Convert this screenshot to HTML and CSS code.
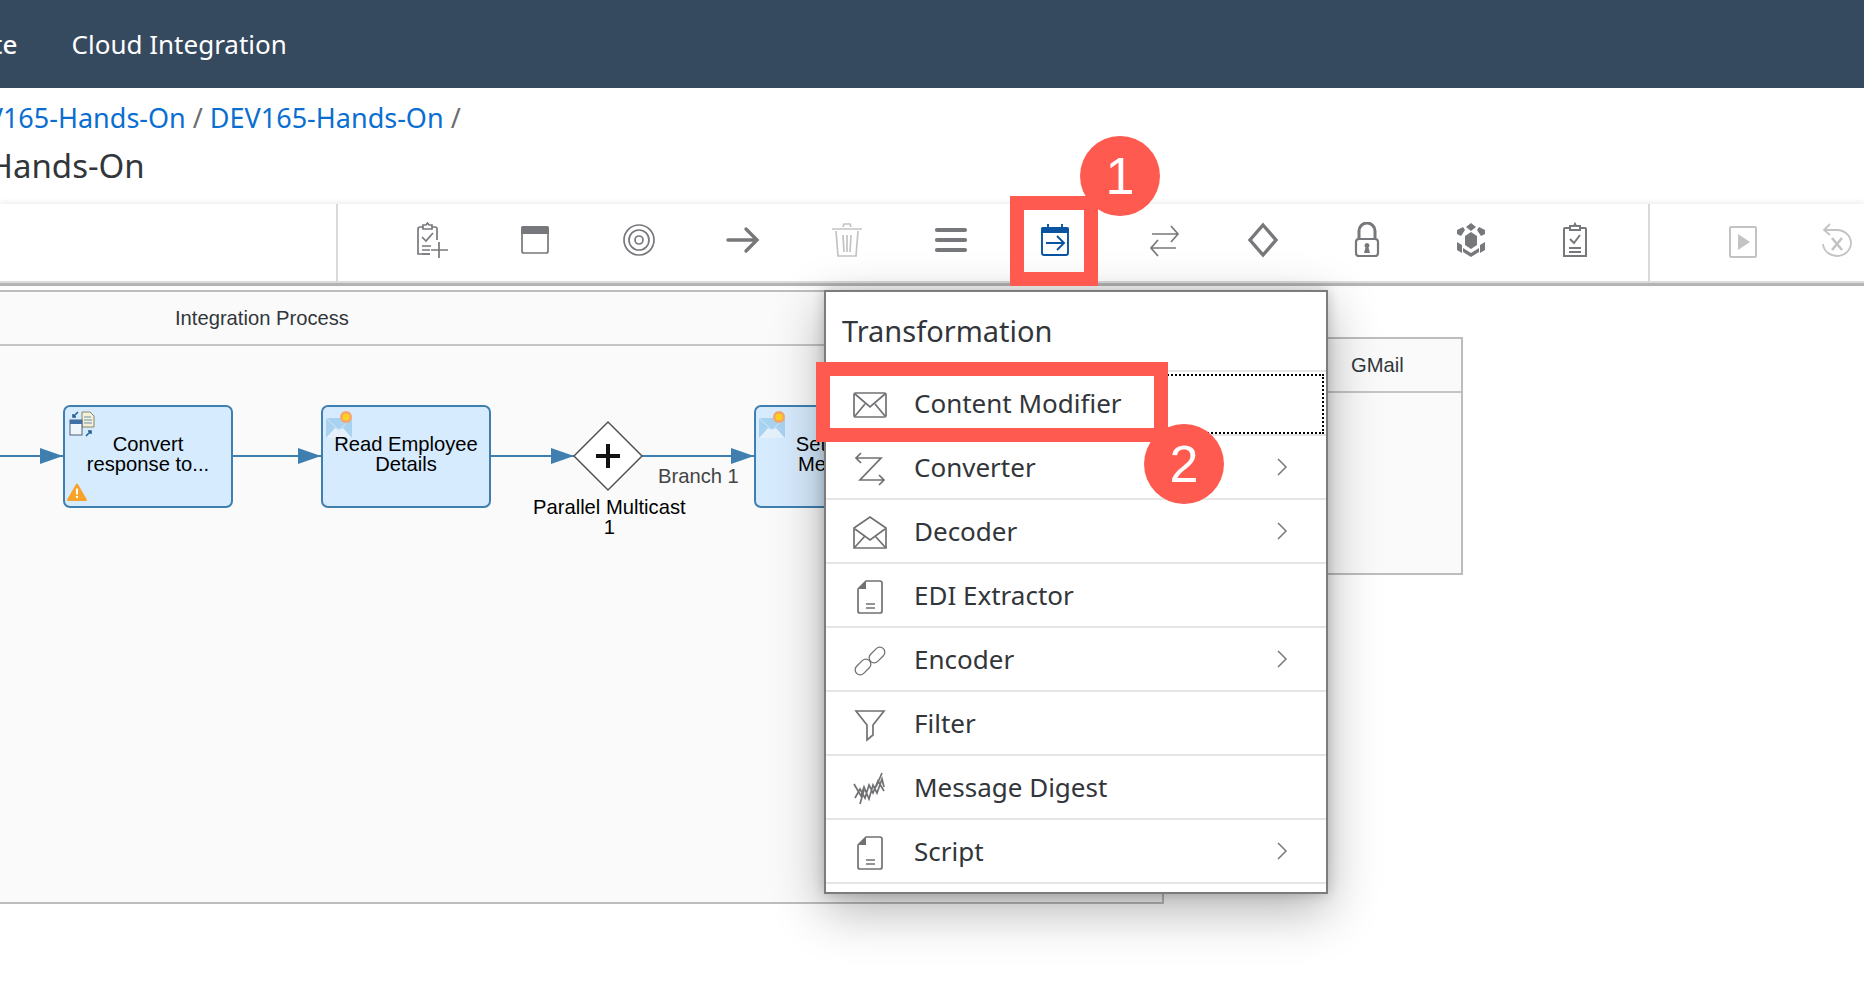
FILE: index.html
```html
<!DOCTYPE html>
<html lang="en">
<head>
    <meta charset="UTF-8">
    <meta name="viewport" content="width=device-width, initial-scale=1.0">
    <title>Cloud Integration</title>
    <link rel="stylesheet" href="styles.css">
</head>
<body>
    <header class="shell-bar">
        <span class="shell-crop">Suite</span>
        <span class="shell-title">Cloud Integration</span>
    </header>

    <div class="page-head">
        <nav class="crumbs">
            <a class="crumb-first">DEV165-Hands-On</a><span class="crumb-sep">/</span><a>DEV165-Hands-On</a><span class="crumb-sep">/</span>
        </nav>
        <h1 class="page-title">DEV165-Hands-On</h1>
    </div>

    <div class="toolbar">
        <div class="tool-blank"></div>
        <div class="tool-group">
            <span class="tool"><svg class="ico" viewBox="0 0 36 36"><path d="M10 5H7a2 2 0 0 0-2 2v25h12M24 18V7a2 2 0 0 0-2-2h-3M10 3h3l1.500-2 1.500 2h3v4H10z"/><path d="M9 15l4 4 7-8M9 24h9M9 28h8M9 32h8M18 28h17M26 20v16"/></svg></span>
            <span class="tool"><svg class="ico" viewBox="0 0 36 36"><rect x="5" y="5" width="26" height="26" rx="2"/><path class="solid" d="M4 6a2 2 0 0 1 2-2h24a2 2 0 0 1 2 2v6H4z"/></svg></span>
            <span class="tool"><svg class="ico" viewBox="0 0 36 36"><circle cx="18" cy="18" r="15"/><circle cx="18" cy="18" r="10"/><circle cx="18" cy="18" r="4"/></svg></span>
            <span class="tool"><svg class="ico thick" viewBox="0 0 36 36"><path d="M3 18h29M21 7l11 11-11 11"/></svg></span>
            <span class="tool"><svg class="ico off" viewBox="0 0 36 36"><path d="M3 7h30M14 5l1-3h6l1 3M7 9l2 25h18l2-25M14 13l1 17M18 13v17M22 13l-1 17"/></svg></span>
            <span class="tool"><svg class="ico thicker" viewBox="0 0 36 36"><path d="M4 8h28M4 18h28M4 28h28"/></svg></span>
            <span class="tool"><svg class="ico blue" viewBox="0 0 36 36"><rect x="5" y="6" width="26" height="27" rx="2"/><path class="solid-blue" d="M4 7a2 2 0 0 1 2-2h24a2 2 0 0 1 2 2v4H4z"/><path d="M11 2v4M25 2v4M9 21h18M20 14l7 7-7 7"/></svg></span>
            <span class="tool"><svg class="ico nudge" viewBox="0 0 36 36"><path d="M6 12h25M25 4l7 8-7 8M30 26H5M12 18l-7 8 7 8"/></svg></span>
            <span class="tool"><svg class="ico thick" viewBox="0 0 36 36"><path d="M18 3l13 15-13 15L5 18z"/></svg></span>
            <span class="tool"><svg class="ico" viewBox="0 0 36 36"><path d="M10 17V9a8 8 0 0 1 16 0v8" stroke-width="3"/><rect x="7" y="17" width="22" height="17" rx="3" stroke-width="2.200"/><path class="solid" d="M18 21a2.500 2.500 0 0 1 1.500 4.500L21 31h-6l1.500-5.500A2.500 2.500 0 0 1 18 21z"/></svg></span>
            <span class="tool"><svg class="ico" viewBox="0 0 36 36"><path class="solid" d="M18 1l5 4-5 4-5-4zM18 10l6 4v9l-6 4-6-4v-9zM10 5l2 3-4 6-4-2V8zM26 5l-2 3 4 6 4-2V8zM4 20l5 3v8l-5-3zM32 20l-5 3v8l5-3zM10 26l8 5 8-5v4l-8 5-8-5z"/></svg></span>
            <span class="tool"><svg class="ico" viewBox="0 0 36 36"><path d="M13 6H8a1 1 0 0 0-1 1v27h22V7a1 1 0 0 0-1-1h-5M13 8V4h4l1-2 1 2h4v4z" stroke-width="2"/><path d="M13 17l4 4 6-8M12 26h12M12 30h12" stroke-width="2"/></svg></span>
        </div>
        <div class="tool-group tool-group-end">
            <span class="tool tool-small"><svg class="ico off low" viewBox="0 0 36 36"><rect x="5" y="3" width="26" height="30" rx="1" stroke-width="2"/><path class="solid-off" d="M13 10l12 8-12 8z"/></svg></span>
            <span class="tool tool-small"><svg class="ico off" viewBox="0 0 36 36"><path d="M11 2L5 8l6 5M5 8h13a14 13 0 1 1-14 14" stroke-width="1.800"/><path d="M13 16l10 12M23 16L13 28" stroke-width="2.600"/></svg></span>
        </div>
    </div>

    <main class="canvas">
        <section class="pool pool-main">
            <div class="pool-head pool-head-main">Integration Process</div>
        </section>
        <section class="pool pool-gmail">
            <div class="pool-head pool-head-gmail">GMail</div>
        </section>

        <svg class="flow" viewBox="0 0 1000 300">
            <path class="edge" d="M0 170H63M233 170H321M491 170H574M642 170H754"/>
            <path class="head" d="M40 162l23 8-23 8zM298 162l23 8-23 8zM551 162l23 8-23 8zM731 162l23 8-23 8z"/>
            <path class="gate" d="M608 136l34 34-34 34-34-34z"/>
            <path class="plus" d="M608 158v24M596 170h24"/>
        </svg>

        <div class="node node-convert">
            <svg class="node-ico" viewBox="0 0 26 26">
                <path fill="#f3f0d8" stroke="#8a8468" d="M13 1h8l4 4v11H13z"/>
                <path stroke="#6f8fb0" fill="none" d="M15 6h7M15 9h8M15 12h8"/>
                <rect x="1" y="9" width="12" height="15" fill="#eef5fb" stroke="#50617a"/>
                <rect x="1" y="9" width="12" height="4" fill="#3f6fa5"/>
                <path stroke="#1d5c99" stroke-width="1.500" fill="none" d="M9 1L4 6M4 3v3h3M17 25l5-5M22 23v-3h-3"/>
            </svg>
            <span>Convert<br>response to...</span>
            <svg class="warn" viewBox="0 0 20 18">
                <path fill="#f9a429" stroke="#f9a429" stroke-width="2" stroke-linejoin="round" d="M10 1.500L19 17H1z"/>
                <path stroke="#fff" stroke-width="2" d="M10 5.500v6M10 13v2"/>
            </svg>
        </div>
        <div class="node node-read">
            <svg class="mail-ico" viewBox="0 0 28 28">
                <path fill="#a9d2f0" d="M1 7h26v20H1z"/>
                <path fill="#e4f1fb" d="M1 27l9-10 4 2 4-2 9 10z"/>
                <path fill="none" stroke="#d3e7f7" d="M1 7l13 12L27 7"/>
                <circle cx="21" cy="6" r="6" fill="#f7a56a"/>
                <circle cx="21" cy="6" r="3.500" fill="#ffd21f"/>
            </svg>
            <span>Read Employee<br>Details</span>
        </div>
        <div class="node node-set">
            <svg class="mail-ico" viewBox="0 0 28 28">
                <path fill="#a9d2f0" d="M1 7h26v20H1z"/>
                <path fill="#e4f1fb" d="M1 27l9-10 4 2 4-2 9 10z"/>
                <path fill="none" stroke="#d3e7f7" d="M1 7l13 12L27 7"/>
                <circle cx="21" cy="6" r="6" fill="#f7a56a"/>
                <circle cx="21" cy="6" r="3.500" fill="#ffd21f"/>
            </svg>
            <span>Set Email<br>Message</span>
        </div>
        <div class="flow-label label-branch">Branch 1</div>
        <div class="flow-label label-gate">Parallel Multicast<br>1</div>

        <div class="menu">
            <div class="menu-title">Transformation</div>
            <div class="menu-row menu-row-focus">
                <svg class="row-ico" viewBox="0 0 36 36"><rect x="2" y="6" width="32" height="24" rx="1.500"/><path d="M3 7l15 13L33 7M3 29l10-12M33 29L23 17"/></svg>
                <span class="row-text">Content Modifier</span>
            </div>
            <div class="menu-row">
                <svg class="row-ico" viewBox="0 0 36 36"><path d="M9 2L4 7l5 5M4 7h25L8 29h24M27 24l5 5-5 5"/></svg>
                <span class="row-text">Converter</span>
                <svg class="chev" viewBox="0 0 12 20"><path d="M2 2l8 8-8 8"/></svg>
            </div>
            <div class="menu-row">
                <svg class="row-ico" viewBox="0 0 36 36"><path d="M2 13L18 2l16 11v20H2zM3 14l15 11 15-11M3 32l10-11M33 32L23 21"/></svg>
                <span class="row-text">Decoder</span>
                <svg class="chev" viewBox="0 0 12 20"><path d="M2 2l8 8-8 8"/></svg>
            </div>
            <div class="menu-row">
                <svg class="row-ico" viewBox="0 0 36 36"><path d="M14 2h14a2 2 0 0 1 2 2v28a2 2 0 0 1-2 2H8a2 2 0 0 1-2-2V10z"/><path class="row-fill" d="M14 2L6 10h8z"/><path d="M14 25h9M14 29h9"/></svg>
                <span class="row-text">EDI Extractor</span>
            </div>
            <div class="menu-row">
                <svg class="row-ico thin" viewBox="0 0 36 36"><rect x="2" y="19" width="18" height="10" rx="5" transform="rotate(-45 11 24)"/><rect x="16" y="7" width="18" height="10" rx="5" transform="rotate(-45 25 12)"/></svg>
                <span class="row-text">Encoder</span>
                <svg class="chev" viewBox="0 0 12 20"><path d="M2 2l8 8-8 8"/></svg>
            </div>
            <div class="menu-row">
                <svg class="row-ico" viewBox="0 0 36 36"><path d="M4 4h28L21 18v10l-6 5V18z"/></svg>
                <span class="row-text">Filter</span>
            </div>
            <div class="menu-row">
                <svg class="row-ico" viewBox="0 0 36 36"><path d="M2 13l7 12 3-9 5 12 4-14 4 8 5-14 2 8M3 27l5-9 5 9 4-13 4 8 5-12 6 10M8 33l4-14M24 16l6-14"/></svg>
                <span class="row-text">Message Digest</span>
            </div>
            <div class="menu-row">
                <svg class="row-ico" viewBox="0 0 36 36"><path d="M14 2h14a2 2 0 0 1 2 2v28a2 2 0 0 1-2 2H8a2 2 0 0 1-2-2V10z"/><path class="row-fill" d="M14 2L6 10h8z"/><path d="M14 25h9M14 29h9"/></svg>
                <span class="row-text">Script</span>
                <svg class="chev" viewBox="0 0 12 20"><path d="M2 2l8 8-8 8"/></svg>
            </div>
        </div>
    </main>

    <div class="mark-box mark-box-tool"></div>
    <div class="mark-box mark-box-row"></div>
    <div class="mark-dot mark-dot-one">1</div>
    <div class="mark-dot mark-dot-two">2</div>
</body>
</html>
```

FILE: styles.css
```css
html, body {
    height: 100%;
}
body {
    font-family: "Noto Sans", Arial, sans-serif;
    background-color: #fff;
    color: #32363a;
    margin: 0;
    position: relative;
    overflow: hidden;
    display: flex;
    flex-direction: column;
}

/* top bar */
.shell-bar {
    height: 88px;
    flex: none;
    background: #354a5f;
    color: #fff;
    display: flex;
    align-items: center;
    font-size: 26px;
    padding-bottom: 1px;
    box-sizing: border-box;
}
.shell-crop {
    font-weight: 500;
    margin-left: -45px;
    margin-right: 54px;
}

/* breadcrumbs and title */
.page-head {
    height: 116px;
    flex: none;
}
.crumbs {
    margin-top: 12px;
    font-size: 27px;
    line-height: 36px;
    white-space: nowrap;
    color: #6a6d70;
}
.crumbs a {
    color: #0a6ed1;
}
.crumb-first {
    margin-left: -48px;
}
.crumb-sep {
    margin: 0 7px;
}
.page-title {
    margin: 9px 0 0 -141px;
    font-size: 33px;
    line-height: 42px;
    font-weight: 400;
    white-space: nowrap;
}

/* toolbar */
.toolbar {
    height: 82px;
    flex: none;
    box-sizing: border-box;
    display: flex;
    background: #fff;
    border-bottom: 3px solid #b4b4b4;
    box-shadow: 0 -2px 5px rgba(0, 0, 0, 0.07), inset 0 -2px #dcdcdc;
}
.tool-blank {
    width: 336px;
    flex: none;
    border-right: 2px solid #d9d9d9;
}
.tool-group {
    display: flex;
    width: 1310px;
    padding-left: 41px;
    padding-bottom: 8px;
    box-sizing: border-box;
    flex: none;
}
.tool-group-end {
    width: 216px;
    padding-left: 46px;
    border-left: 2px solid #d9d9d9;
}
.tool {
    width: 104px;
    flex: none;
    display: flex;
    align-items: center;
    justify-content: center;
}
.tool-small {
    width: 94px;
}
.ico {
    width: 36px;
    height: 36px;
    fill: none;
    stroke: #77787b;
    stroke-width: 1.700;
}
.ico.thick {
    stroke-width: 3.400;
    stroke-linecap: round;
}
.ico.thicker {
    stroke-width: 4.200;
    stroke-linecap: round;
}
.ico.off {
    stroke: #c3c3c3;
}
.ico.low {
    margin-top: 4px;
}
.ico.blue {
    stroke: #0854a0;
    stroke-width: 1.900;
}
.ico.nudge {
    margin-left: 10px;
}
.solid {
    fill: #77787b;
    stroke: none;
}
.solid-blue {
    fill: #0854a0;
    stroke: none;
}
.solid-off {
    fill: #c3c3c3;
    stroke: none;
}

/* diagram */
.canvas {
    flex: 1;
    position: relative;
}
.pool {
    position: absolute;
    box-sizing: border-box;
    background: #fafafa;
    border: 2px solid #bdbdbd;
}
.pool-main {
    left: -4px;
    top: 4px;
    width: 1168px;
    height: 614px;
}
.pool-gmail {
    left: 1100px;
    top: 51px;
    width: 363px;
    height: 238px;
}
.pool-head {
    border-bottom: 2px solid #c4c4c4;
    font-family: "Liberation Sans", Arial, sans-serif;
    font-size: 20.2px;
    color: #32363a;
    display: flex;
    align-items: center;
    box-sizing: border-box;
}
.pool-head-main {
    height: 54px;
    padding-left: 177px;
}
.pool-head-gmail {
    height: 54px;
    padding-left: 249px;
}
.flow {
    position: absolute;
    left: 0;
    top: 0;
    width: 1000px;
    height: 300px;
}
.edge {
    fill: none;
    stroke: #3f7fb0;
    stroke-width: 2;
}
.head {
    fill: #3f7fb0;
}
.gate {
    fill: #fff;
    stroke: #555;
    stroke-width: 1.500;
}
.plus {
    fill: none;
    stroke: #111;
    stroke-width: 4;
}
.node {
    position: absolute;
    top: 119px;
    width: 170px;
    height: 103px;
    box-sizing: border-box;
    background: #d6ebfd;
    border: 2px solid #3f7fb0;
    border-radius: 7px;
    font-family: "Liberation Sans", Arial, sans-serif;
    font-size: 20.2px;
    line-height: 20px;
    color: #000;
    text-align: center;
    display: flex;
    align-items: center;
    justify-content: center;
    padding-bottom: 5px;
}
.node span {
    position: relative;
}
.node-convert {
    left: 63px;
}
.node-read {
    left: 321px;
}
.node-set {
    left: 754px;
}
.node-ico {
    position: absolute;
    left: 4px;
    top: 4px;
    width: 26px;
    height: 26px;
}
.mail-ico {
    position: absolute;
    left: 2px;
    top: 4px;
    width: 28px;
    height: 28px;
}
.warn {
    position: absolute;
    left: 2px;
    bottom: 5px;
    width: 20px;
    height: 18px;
}
.flow-label {
    position: absolute;
    font-family: "Liberation Sans", Arial, sans-serif;
    font-size: 20.2px;
    line-height: 20px;
    text-align: center;
    white-space: nowrap;
}
.label-branch {
    left: 658px;
    top: 180px;
    color: #444;
}
.label-gate {
    left: 533px;
    top: 211px;
    color: #000;
}

/* popup menu */
.menu {
    position: absolute;
    left: 824px;
    top: 4px;
    width: 504px;
    height: 604px;
    box-sizing: border-box;
    background: #fff;
    border: 2px solid #7c7c7c;
    box-shadow: 0 16px 48px rgba(0, 0, 0, 0.3), 0 0 12px rgba(0, 0, 0, 0.2);
}
.menu-title {
    height: 80px;
    box-sizing: border-box;
    padding: 17px 0 0 16px;
    font-size: 29px;
    line-height: 44px;
    border-bottom: 2px solid #e5e5e5;
}
.menu-row {
    height: 64px;
    box-sizing: border-box;
    border-bottom: 2px solid #e5e5e5;
    display: flex;
    align-items: center;
    padding: 3px 0 0 26px;
    font-size: 26px;
    position: relative;
}
.menu-row-focus::after {
    content: "";
    position: absolute;
    left: 2px;
    right: 2px;
    top: 2px;
    bottom: 0;
    border: 2px dotted #000;
}
.row-ico {
    width: 36px;
    height: 36px;
    flex: none;
    fill: none;
    stroke: #6f7174;
    stroke-width: 1.700;
}
.row-ico.thin {
    stroke-width: 1.300;
}
.row-fill {
    fill: #6f7174;
    stroke: none;
}
.row-text {
    margin: 0 0 3px 26px;
}
.chev {
    position: absolute;
    left: 450px;
    top: 21px;
    width: 12px;
    height: 20px;
    fill: none;
    stroke: #77787b;
    stroke-width: 1.500;
}

/* red annotations */
.mark-box {
    position: absolute;
    box-sizing: border-box;
    border: 14px solid #ff5a4f;
}
.mark-box-tool {
    left: 1010px;
    top: 196px;
    width: 88px;
    height: 90px;
}
.mark-box-row {
    left: 816px;
    top: 362px;
    width: 352px;
    height: 80px;
}
.mark-dot {
    position: absolute;
    width: 80px;
    height: 80px;
    border-radius: 50%;
    background: #ff5a4f;
    color: #fff;
    font-family: "Liberation Sans", Arial, sans-serif;
    font-size: 52px;
    line-height: 80px;
    text-align: center;
}
.mark-dot-one {
    left: 1080px;
    top: 136px;
}
.mark-dot-two {
    left: 1144px;
    top: 424px;
}
```
